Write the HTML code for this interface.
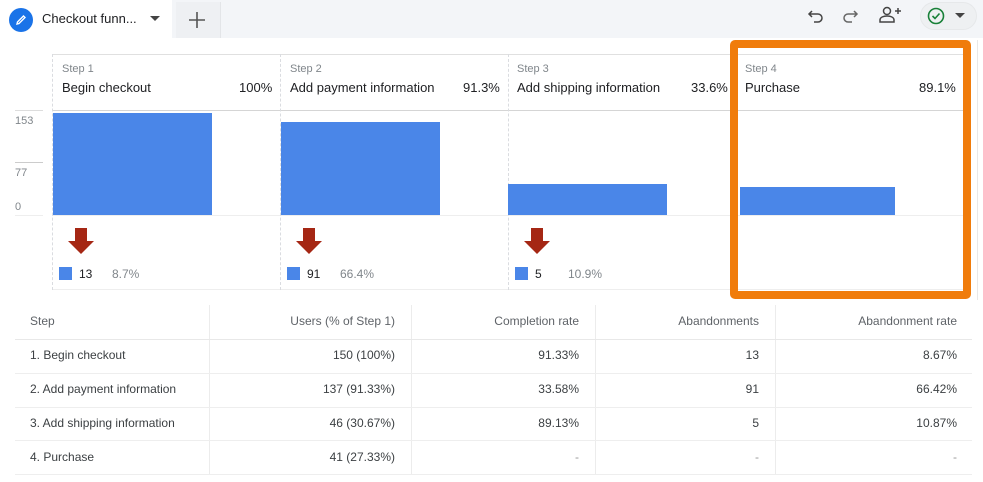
<!DOCTYPE html>
<html><head><meta charset="utf-8"><style>
*{margin:0;padding:0;box-sizing:border-box}
body{width:983px;height:482px;background:#fff;font-family:"Liberation Sans",Roboto,sans-serif;position:relative;overflow:hidden;color:#3c4043}
.a{position:absolute}
.t{position:absolute;white-space:nowrap}
.bar{position:absolute;background:#4a86e8}
.vl{position:absolute;border-left:1px dashed #dadce0}
.hl{position:absolute;height:1px;background:#e0e0e0}
.step{font-size:11px;color:#80868b}
.nm{font-size:13px;color:#202124}
.cell{position:absolute;font-size:12px;color:#3c4043;white-space:nowrap}
</style></head><body>
<div class="a" style="left:0;top:0;width:983px;height:38px;background:#f3f5f8"></div>
<div class="a" style="left:0;top:0;width:172px;height:40px;background:#fff"></div>
<div class="a" style="left:176px;top:2px;width:45px;height:36px;background:#eef0f3;border-right:1px solid #e3e5e8"></div>
<div class="a" style="left:9px;top:8px;width:24px;height:24px;border-radius:50%;background:#1a73e8"></div>
<svg class="a" style="left:13px;top:12px" width="16" height="16" viewBox="0 0 16 16"><path d="M4 12 L4.5 10 L10.5 4 L12 5.5 L6 11.5 Z" fill="none" stroke="#fff" stroke-width="1.4"/></svg>
<div class="t" style="left:42px;top:11px;font-size:13px;color:#202124">Checkout funn...</div>
<svg class="a" style="left:150px;top:16px" width="10" height="6"><path d="M0 0H10L5 5Z" fill="#444"/></svg>
<svg class="a" style="left:188px;top:11px" width="18" height="18"><path d="M9 1V17M1 9H17" stroke="#555" stroke-width="1.6"/></svg>
<svg class="a" style="left:806px;top:7px" width="20" height="20" viewBox="0 0 20 20"><path d="M6 4L3 7L6 10M3 7H12A4 4 0 0 1 12 15H8" fill="none" stroke="#444" stroke-width="1.5"/></svg>
<svg class="a" style="left:840px;top:7px" width="20" height="20" viewBox="0 0 20 20"><path d="M14 4L17 7L14 10M17 7H8A4 4 0 0 0 8 15H12" fill="none" stroke="#666" stroke-width="1.5"/></svg>
<svg class="a" style="left:877px;top:5px" width="26" height="20" viewBox="0 0 26 20"><circle cx="10" cy="6" r="3.5" fill="none" stroke="#444" stroke-width="1.5"/><path d="M3 17V15C3 12 7 11 10 11C13 11 17 12 17 15V17Z" fill="none" stroke="#444" stroke-width="1.5"/><path d="M21 3V9M18 6H24" stroke="#444" stroke-width="1.5"/></svg>
<div class="a" style="left:920px;top:2px;width:57px;height:28px;border-radius:14px;background:#eef0f2;border:1px solid #e6e8ea"></div>
<svg class="a" style="left:927px;top:7px" width="18" height="18" viewBox="0 0 18 18"><circle cx="9" cy="9" r="7.5" fill="none" stroke="#188038" stroke-width="1.6"/><path d="M5.5 9L8 11.5L12.5 6.5" fill="none" stroke="#188038" stroke-width="1.6"/></svg>
<svg class="a" style="left:955px;top:13px" width="10" height="6"><path d="M0 0H10L5 5Z" fill="#444"/></svg>
<div class="a" style="left:977px;top:40px;width:1px;height:260px;background:#e8e8e8"></div>

<div class="hl" style="left:52px;top:54px;width:912px"></div>
<div class="hl" style="left:52px;top:110px;width:912px;background:#d5d5d5"></div>
<div class="hl" style="left:52px;top:215px;width:912px;background:#eee"></div>
<div class="hl" style="left:52px;top:289px;width:912px;background:#eee"></div>
<div class="vl" style="left:52px;top:54px;height:236px"></div>
<div class="vl" style="left:280px;top:54px;height:236px"></div>
<div class="vl" style="left:508px;top:54px;height:236px"></div>
<div class="hl" style="left:15px;top:110px;width:28px;background:#ddd"></div>
<div class="hl" style="left:15px;top:162px;width:28px;background:#ccc"></div>
<div class="hl" style="left:15px;top:215px;width:28px;background:#eee"></div>
<div class="t" style="left:15px;top:115px;font-size:11px;color:#80868b">153</div>
<div class="t" style="left:15px;top:167px;font-size:11px;color:#80868b">77</div>
<div class="t" style="left:15px;top:201px;font-size:11px;color:#80868b">0</div>

<div class="t step" style="left:62px;top:63px">Step 1</div>
<div class="t nm" style="left:62px;top:80px">Begin checkout</div>
<div class="t nm" style="left:239px;top:80px">100%</div>
<div class="t step" style="left:290px;top:63px">Step 2</div>
<div class="t nm" style="left:290px;top:80px">Add payment information</div>
<div class="t nm" style="left:463px;top:80px">91.3%</div>
<div class="t step" style="left:517px;top:63px">Step 3</div>
<div class="t nm" style="left:517px;top:80px">Add shipping information</div>
<div class="t nm" style="left:691px;top:80px">33.6%</div>
<div class="t step" style="left:745px;top:63px">Step 4</div>
<div class="t nm" style="left:745px;top:80px">Purchase</div>
<div class="t nm" style="left:919px;top:80px">89.1%</div>

<div class="bar" style="left:53px;top:113px;width:159px;height:102px"></div>
<div class="bar" style="left:281px;top:122px;width:159px;height:93px"></div>
<div class="bar" style="left:508px;top:184px;width:159px;height:31px"></div>
<div class="bar" style="left:740px;top:187px;width:155px;height:28px"></div>

<svg class="a" style="left:68px;top:228px" width="26" height="27"><path d="M7 0H19V13H26L13 26L0 13H7Z" fill="#a52714"/></svg>
<svg class="a" style="left:296px;top:228px" width="26" height="27"><path d="M7 0H19V13H26L13 26L0 13H7Z" fill="#a52714"/></svg>
<svg class="a" style="left:524px;top:228px" width="26" height="27"><path d="M7 0H19V13H26L13 26L0 13H7Z" fill="#a52714"/></svg>
<div class="a" style="left:59px;top:267px;width:13px;height:13px;background:#4a86e8"></div>
<div class="t" style="left:79px;top:267px;font-size:12px;color:#202124">13</div>
<div class="t" style="left:112px;top:267px;font-size:12px;color:#80868b">8.7%</div>
<div class="a" style="left:287px;top:267px;width:13px;height:13px;background:#4a86e8"></div>
<div class="t" style="left:307px;top:267px;font-size:12px;color:#202124">91</div>
<div class="t" style="left:340px;top:267px;font-size:12px;color:#80868b">66.4%</div>
<div class="a" style="left:515px;top:267px;width:13px;height:13px;background:#4a86e8"></div>
<div class="t" style="left:535px;top:267px;font-size:12px;color:#202124">5</div>
<div class="t" style="left:568px;top:267px;font-size:12px;color:#80868b">10.9%</div>

<div class="a" style="left:730px;top:40px;width:241px;height:259px;border:8px solid #f07c0b;border-radius:5px"></div>

<!-- table -->
<div class="a" style="left:209px;top:305px;width:1px;height:170px;background:#ececec"></div>
<div class="a" style="left:411px;top:305px;width:1px;height:170px;background:#ececec"></div>
<div class="a" style="left:595px;top:305px;width:1px;height:170px;background:#ececec"></div>
<div class="a" style="left:775px;top:305px;width:1px;height:170px;background:#ececec"></div>
<div class="hl" style="left:15px;top:339px;width:957px;background:#e8e8e8"></div>
<div class="hl" style="left:15px;top:373px;width:957px;background:#eee"></div>
<div class="hl" style="left:15px;top:407px;width:957px;background:#eee"></div>
<div class="hl" style="left:15px;top:440px;width:957px;background:#eee"></div>
<div class="hl" style="left:15px;top:474px;width:957px;background:#eee"></div>

<div class="cell" style="left:30px;top:314px;color:#5f6368">Step</div>
<div class="cell" style="right:588px;top:314px;color:#5f6368">Users (% of Step 1)</div>
<div class="cell" style="right:404px;top:314px;color:#5f6368">Completion rate</div>
<div class="cell" style="right:224px;top:314px;color:#5f6368">Abandonments</div>
<div class="cell" style="right:26px;top:314px;color:#5f6368">Abandonment rate</div>

<div class="cell" style="left:30px;top:348px">1. Begin checkout</div>
<div class="cell" style="right:588px;top:348px">150 (100%)</div>
<div class="cell" style="right:404px;top:348px">91.33%</div>
<div class="cell" style="right:224px;top:348px">13</div>
<div class="cell" style="right:26px;top:348px">8.67%</div>

<div class="cell" style="left:30px;top:382px">2. Add payment information</div>
<div class="cell" style="right:588px;top:382px">137 (91.33%)</div>
<div class="cell" style="right:404px;top:382px">33.58%</div>
<div class="cell" style="right:224px;top:382px">91</div>
<div class="cell" style="right:26px;top:382px">66.42%</div>

<div class="cell" style="left:30px;top:416px">3. Add shipping information</div>
<div class="cell" style="right:588px;top:416px">46 (30.67%)</div>
<div class="cell" style="right:404px;top:416px">89.13%</div>
<div class="cell" style="right:224px;top:416px">5</div>
<div class="cell" style="right:26px;top:416px">10.87%</div>

<div class="cell" style="left:30px;top:450px">4. Purchase</div>
<div class="cell" style="right:588px;top:450px">41 (27.33%)</div>
<div class="cell" style="right:404px;top:450px;color:#999">-</div>
<div class="cell" style="right:224px;top:450px;color:#999">-</div>
<div class="cell" style="right:26px;top:450px;color:#999">-</div>
</body></html>
